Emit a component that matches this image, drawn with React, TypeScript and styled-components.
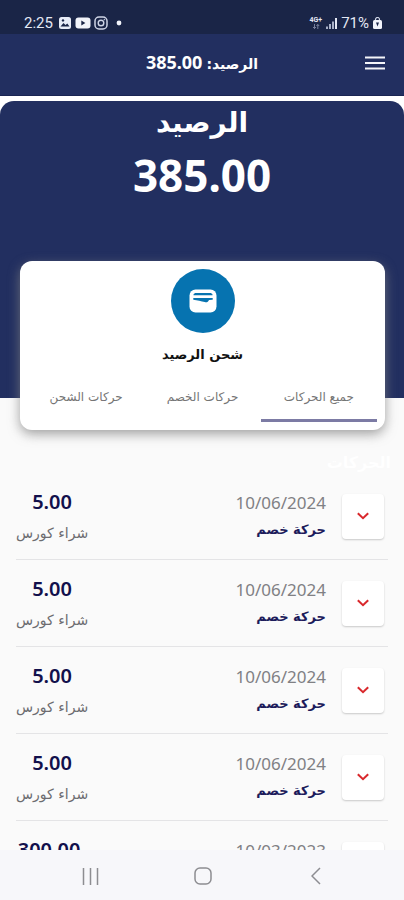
import React, { useState } from "react";
import styled, { createGlobalStyle } from "styled-components";

const arabic = `"DejaVu Sans", sans-serif`;
const latin = `"Noto Sans", "DejaVu Sans", sans-serif`;

const GlobalStyle = createGlobalStyle`
  * { box-sizing: border-box; }
  body { margin: 0; background: #fafafa; font-family: ${arabic}; }
  button { border: 0; padding: 0; background: none; font: inherit; color: inherit; cursor: pointer; }
  h1, h2, p, ul { margin: 0; padding: 0; font-weight: inherit; font-size: inherit; }
`;

const Screen = styled.div`
  display: flex;
  flex-direction: column;
  height: 100vh;
`;

const StatusBar = styled.div`
  display: flex;
  justify-content: space-between;
  align-items: center;
  flex: none;
  height: 34px;
  padding: 12px 22px 0 24px;
  background: #1a2547;
  color: #e4e8f4;
  font-family: Roboto, sans-serif;
  font-size: 15px;
`;

const StatusGroup = styled.div<{ $gap: number }>`
  display: flex;
  align-items: center;
  gap: ${(p) => p.$gap}px;
`;

const StatusTime = styled.span`
  margin-right: 2px;
`;

const AppBar = styled.header`
  display: grid;
  grid-template-columns: 40px 1fr 40px;
  align-items: center;
  flex: none;
  height: 62px;
  padding: 0 9px 4px;
  background: #222f60;
  border-bottom: 1px solid #1a2553;
  color: #fff;
`;

const AppTitle = styled.h1`
  display: flex;
  justify-content: center;
  align-items: baseline;
  gap: 4px;
  font-size: 14px;
  line-height: 24px;
  font-weight: 700;
`;

const TitleAmount = styled.span`
  font-family: ${latin};
  font-size: 18px;
`;

const MenuButton = styled.button`
  display: grid;
  place-items: center;
  height: 40px;
`;

const Content = styled.main`
  flex: 1;
  min-height: 0;
  overflow-y: auto;
  scrollbar-width: none;
`;

const HeroFrame = styled.div`
  padding-top: 5px;
  background: #fff;
`;

const Hero = styled.section`
  display: flex;
  flex-direction: column;
  align-items: center;
  height: 297px;
  border-radius: 14px 14px 0 0;
  background: #222f60;
  color: #fff;
  font-weight: 700;
`;

const HeroTitle = styled.h2`
  font-size: 28px;
  line-height: 44px;
  font-weight: 700;
`;

const HeroAmount = styled.p`
  font-family: ${latin};
  font-size: 44px;
  line-height: 60px;
`;

const Card = styled.section`
  position: relative;
  display: flex;
  flex-direction: column;
  align-items: center;
  margin: -137px 19px 0 20px;
  padding: 8px 8px;
  border-radius: 12px;
  background: #fff;
  box-shadow: 0 4px 12px rgba(130, 130, 130, 0.75);
`;

const TopUpButton = styled.button`
  display: flex;
  flex-direction: column;
  align-items: center;
  gap: 10px;
  color: #111;
  font-size: 13px;
  line-height: 24px;
  font-weight: 700;
`;

const TopUpIcon = styled.span`
  display: grid;
  place-items: center;
  width: 64px;
  height: 64px;
  border-radius: 50%;
  background: #0673b0;
`;

const Tabs = styled.div`
  display: grid;
  grid-template-columns: repeat(3, 1fr);
  align-self: stretch;
  margin-top: 4px;
`;

const Tab = styled.button<{ $active: boolean }>`
  height: 51px;
  padding-top: 4px;
  border-bottom: 3px solid ${(p) => (p.$active ? "#7c7ba4" : "transparent")};
  color: #757575;
  font-size: 12px;
  line-height: 20px;
`;

const ListTitle = styled.h2`
  padding: 23px 13px 0;
  color: #fff;
  font-size: 16px;
  line-height: 20px;
  font-weight: 700;
`;

const List = styled.ul`
  padding: 0 16px;
  list-style: none;
`;

const Row = styled.li`
  display: flex;
  align-items: center;
  gap: 16px;
  height: 87px;
  padding: 0 4px 0 0;
  border-bottom: 1px solid #e4e4e6;
`;

const ExpandButton = styled.button`
  display: grid;
  place-items: center;
  width: 42px;
  height: 45px;
  border-radius: 4px;
  background: #fff;
  box-shadow: 0 1px 2px rgba(0, 0, 0, 0.2);
`;

const RowDetails = styled.div`
  flex: 1;
`;

const RowDate = styled.p`
  color: #808084;
  font-family: ${latin};
  font-size: 17px;
  line-height: 28px;
`;

const RowKind = styled.p`
  color: #1d1c5c;
  font-size: 13px;
  line-height: 26px;
  font-weight: 700;
`;

const RowSum = styled.div`
  padding-top: 4px;
  text-align: center;
`;

const RowAmount = styled.p`
  color: #12104c;
  font-family: ${latin};
  font-size: 20px;
  line-height: 30px;
  font-weight: 600;
`;

const RowNote = styled.p`
  color: #6c6c70;
  font-size: 14px;
  line-height: 32px;
`;

const SystemNav = styled.nav`
  display: grid;
  grid-template-columns: repeat(3, 1fr);
  flex: none;
  height: 50px;
  padding: 2px 32px 0 34px;
  background: #f7f7fa;
`;

const NavButton = styled.button`
  display: grid;
  place-items: center;
  color: #8d8d91;
`;

const NetworkLabel = styled.span`
  display: flex;
  flex-direction: column;
  align-items: center;
  font-size: 7px;
  line-height: 7px;
  font-weight: 700;
`;

const tabs = ["جميع الحركات", "حركات الخصم", "حركات الشحن"];

const movements = [
  { date: "10/06/2024", amount: "5.00", kind: "حركة خصم", note: "شراء كورس" },
  { date: "10/06/2024", amount: "5.00", kind: "حركة خصم", note: "شراء كورس" },
  { date: "10/06/2024", amount: "5.00", kind: "حركة خصم", note: "شراء كورس" },
  { date: "10/06/2024", amount: "5.00", kind: "حركة خصم", note: "شراء كورس" },
  { date: "10/03/2023", amount: "300.00", kind: "حركة شحن", note: "شحن رصيد" },
];

const PhotoIcon = () => (
  <svg width="14" height="14" viewBox="0 0 14 14" aria-hidden="true">
    <rect x="1" y="1" width="12" height="12" rx="2.5" fill="#e8ecf7" />
    <path d="M2.500 10.500 5.500 7l2 2 1.800-1.600 2.200 3.100z" fill="#1a2547" />
    <circle cx="5" cy="4.4" r="1.2" fill="#1a2547" />
  </svg>
);

const VideoIcon = () => (
  <svg width="16" height="14" viewBox="0 0 16 14" aria-hidden="true">
    <rect x="0.5" y="1.5" width="15" height="11" rx="3" fill="#f1f3fa" />
    <path d="M6.300 4.600v4.800L10.400 7z" fill="#1a2547" />
  </svg>
);

const CameraIcon = () => (
  <svg width="14" height="14" viewBox="0 0 14 14" fill="none" stroke="#cfd5e6" aria-hidden="true">
    <rect x="1" y="1" width="12" height="12" rx="4" strokeWidth="1.5" />
    <circle cx="7" cy="7" r="2.8" strokeWidth="1.4" />
    <circle cx="10.4" cy="3.6" r="0.5" fill="#cfd5e6" strokeWidth="0.5" />
  </svg>
);

const DotIcon = () => (
  <svg width="16" height="6" viewBox="0 0 16 6" aria-hidden="true">
    <circle cx="8" cy="3" r="2.4" fill="#f1f3fa" />
  </svg>
);

const ArrowsIcon = () => (
  <svg width="8" height="5" viewBox="0 0 8 5" fill="none" stroke="#8e97b3" aria-hidden="true">
    <path d="M2.500 0v4.500M1 3l1.500 1.500L4 3M5.800 5V.5M4.400 2 5.800.5 7.200 2" strokeWidth="0.8" />
  </svg>
);

const SignalIcon = () => (
  <svg width="11" height="11" viewBox="0 0 11 11" aria-hidden="true">
    <path d="M0 8.500h2V11H0zM3 6h2v5H3zM6 3.500h2V11H6z" fill="#a9b1c8" />
    <path d="M9 0h2v11H9z" fill="#e4e8f4" />
  </svg>
);

const BatteryIcon = () => (
  <svg width="9" height="12" viewBox="0 0 9 12" aria-hidden="true">
    <path d="M2.500 3.500V2.500a2 2 0 0 1 4 0v1" fill="none" stroke="#cfd5e6" strokeWidth="1.200" />
    <rect x="0" y="3" width="9" height="9" rx="1.500" fill="#f1f3fa" />
    <path d="M3 5.500h3L4.500 9.500z" fill="#1a2547" />
  </svg>
);

const MenuIcon = () => (
  <svg width="20" height="14" viewBox="0 0 20 14" aria-hidden="true">
    <path d="M0 1.500h20M0 7h20M0 12.500h20" stroke="#f4f5fa" strokeWidth="2" />
  </svg>
);

const WalletIcon = () => (
  <svg width="28" height="24" viewBox="0 0 28 24" aria-hidden="true">
    <rect x="0.500" y="0.500" width="27" height="23" rx="6" fill="#fff" />
    <path d="M4.500 5.500C5 4.500 5.800 4 7 4h14c1.200 0 2 .5 2.500 1.500V6.200h-19z" fill="#0673b0" />
    <path d="M4.300 9h19.400v1.700l-3.700.3c-.9 2-2.300 2.700-4.200 2.100C12.200 12 8.400 11.400 4.300 10.700z" fill="#0673b0" />
  </svg>
);

const ChevronDownIcon = () => (
  <svg width="14" height="8" viewBox="0 0 14 8" aria-hidden="true">
    <path d="M1.800 1.200 7 6.200l5.200-5" fill="none" stroke="#d9282c" strokeWidth="2" />
  </svg>
);

const RecentsIcon = () => (
  <svg width="17" height="17" viewBox="0 0 17 17" aria-hidden="true">
    <path d="M1.500 0v17M8.500 0v17M15.500 0v17" stroke="currentColor" strokeWidth="1.500" />
  </svg>
);

const HomeIcon = () => (
  <svg width="18" height="18" viewBox="0 0 18 18" aria-hidden="true">
    <rect x="1" y="1" width="16" height="16" rx="5" fill="none" stroke="currentColor" strokeWidth="1.500" />
  </svg>
);

const BackIcon = () => (
  <svg width="10" height="18" viewBox="0 0 10 18" aria-hidden="true">
    <path d="M9 1 1 9l8 8" fill="none" stroke="currentColor" strokeWidth="1.500" />
  </svg>
);

export default function App() {
  const [active, setActive] = useState(0);
  return (
    <Screen dir="rtl" lang="ar">
      <GlobalStyle />
      <StatusBar dir="ltr">
        <StatusGroup $gap={3}>
          <StatusTime>2:25</StatusTime>
          <PhotoIcon />
          <VideoIcon />
          <CameraIcon />
          <DotIcon />
        </StatusGroup>
        <StatusGroup $gap={4}>
          <NetworkLabel>
            4G+
            <ArrowsIcon />
          </NetworkLabel>
          <SignalIcon />
          <span>71%</span>
          <BatteryIcon />
        </StatusGroup>
      </StatusBar>
      <AppBar>
        <MenuButton aria-label="القائمة">
          <MenuIcon />
        </MenuButton>
        <AppTitle>
          <span>الرصيد:</span>
          <TitleAmount>385.00</TitleAmount>
        </AppTitle>
      </AppBar>
      <Content>
        <HeroFrame>
          <Hero>
            <HeroTitle>الرصيد</HeroTitle>
            <HeroAmount>385.00</HeroAmount>
          </Hero>
        </HeroFrame>
        <Card>
          <TopUpButton>
            <TopUpIcon>
              <WalletIcon />
            </TopUpIcon>
            شحن الرصيد
          </TopUpButton>
          <Tabs role="tablist">
            {tabs.map((label, i) => (
              <Tab key={label} role="tab" aria-selected={i === active} $active={i === active} onClick={() => setActive(i)}>
                {label}
              </Tab>
            ))}
          </Tabs>
        </Card>
        <ListTitle>الحركات</ListTitle>
        <List>
          {movements.map((m, i) => (
            <Row key={i}>
              <ExpandButton aria-label="عرض التفاصيل">
                <ChevronDownIcon />
              </ExpandButton>
              <RowDetails>
                <RowDate>{m.date}</RowDate>
                <RowKind>{m.kind}</RowKind>
              </RowDetails>
              <RowSum>
                <RowAmount>{m.amount}</RowAmount>
                <RowNote>{m.note}</RowNote>
              </RowSum>
            </Row>
          ))}
        </List>
      </Content>
      <SystemNav dir="ltr">
        <NavButton aria-label="التطبيقات الأخيرة">
          <RecentsIcon />
        </NavButton>
        <NavButton aria-label="الرئيسية">
          <HomeIcon />
        </NavButton>
        <NavButton aria-label="رجوع">
          <BackIcon />
        </NavButton>
      </SystemNav>
    </Screen>
  );
}
